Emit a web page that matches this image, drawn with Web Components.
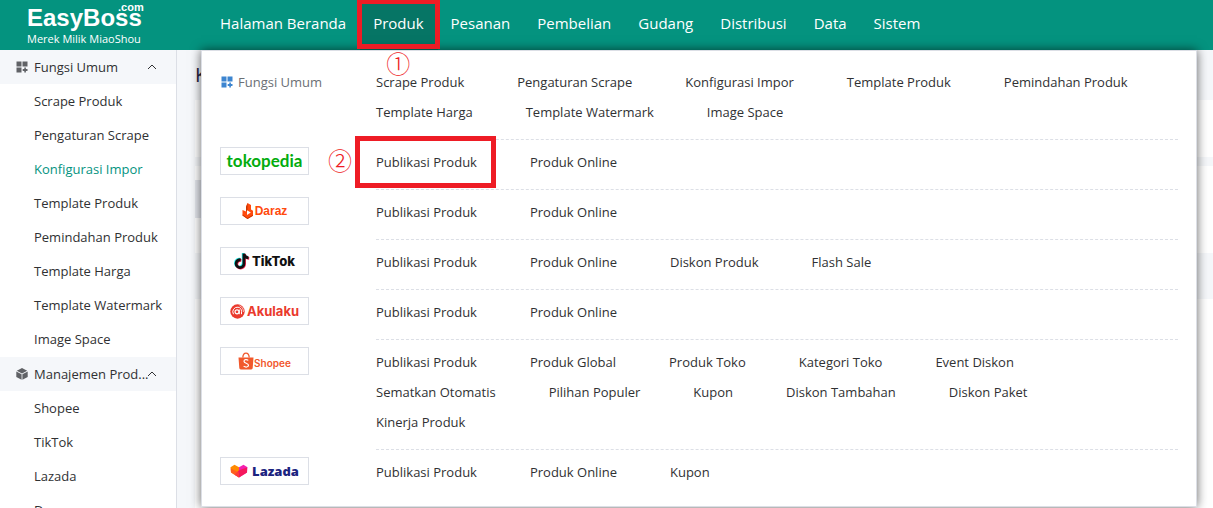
<!DOCTYPE html>
<html lang="id">
<head>
<meta charset="utf-8">
<title>EasyBoss</title>
<style>
  html, body {
    margin: 0;
    height: 100%;
    overflow: hidden;
  }
  body {
    font-family: "Open Sans", "Noto Sans", sans-serif;
    font-size: 13px;
    color: #303133;
  }
</style>
</head>
<body>
<easy-app></easy-app>

<script>
const gridIcon = `
  <svg viewBox="0 0 12 12" width="12" height="12" fill="currentColor" aria-hidden="true">
    <path d="M0.5 0.5h5v5h-5zM6.5 0.5h5v5h-5zM0.5 6.5h5v5h-5zM8.3 6.5h1.6v1.6h1.6v1.8h-1.6v1.6H8.3V9.9H6.7V8.1h1.6z"/>
  </svg>`;

const boxIcon = `
  <svg viewBox="0 0 12 12" width="12" height="12" fill="currentColor" aria-hidden="true">
    <path d="M6 0l5.2 2.7L6 5.4 0.8 2.7zM0.3 3.5l5.3 2.7v5.6L0.3 9.1zM11.7 3.5L6.4 6.2v5.6l5.3-2.7z"/>
  </svg>`;

class StepMark extends HTMLElement {
  constructor() {
    super();
    this.attachShadow({ mode: 'open' });
    this.shadowRoot.innerHTML = `
      <style>
        :host {
          display: block;
          width: 24px;
          font: 300 24px/22px "Noto Sans CJK SC", sans-serif;
          text-align: center;
          color: #ee1c25;
          pointer-events: none;
        }
      </style>
      <slot></slot>
    `;
  }
}
customElements.define('step-mark', StepMark);

class TopBar extends HTMLElement {
  constructor() {
    super();
    this.attachShadow({ mode: 'open' });
  }

  connectedCallback() {
    const items = ['Halaman Beranda', 'Produk', 'Pesanan', 'Pembelian', 'Gudang', 'Distribusi', 'Data', 'Sistem'];
    this.shadowRoot.innerHTML = `
      <style>
        :host {
          display: flex;
          height: 50px;
          background: #04937f;
          color: white;
        }
        a {
          color: inherit;
          text-decoration: none;
        }
        .brand {
          flex: none;
          box-sizing: border-box;
          width: 207px;
          padding: 5px 0 0 27px;
        }
        .name {
          display: flex;
          position: relative;
          font: bold 24px/26px "Liberation Sans", Arial, sans-serif;
        }
        .name small {
          position: absolute;
          left: 91px;
          top: -3px;
          font-size: 11px;
          line-height: 11px;
        }
        .tagline {
          display: block;
          font-size: 11px;
          line-height: 16px;
        }
        nav {
          display: flex;
          font-size: 15px;
          line-height: 46px;
          white-space: nowrap;
        }
        nav a {
          position: relative;
          height: 50px;
          padding: 0 14px 0 13px;
        }
        nav a.active {
          background: #067565;
        }
        .frame {
          position: absolute;
          inset: -1px -2px 1px -3px;
          z-index: 3;
          border: 5px solid #ee1c25;
        }
        step-mark {
          position: absolute;
          left: 26px;
          top: 52px;
          z-index: 3;
        }
      </style>
      <a class="brand" href="#">
        <span class="name">EasyBoss<small>.com</small></span>
        <span class="tagline">Merek Milik MiaoShou</span>
      </a>
      <nav>
        ${items.map(item => item === 'Produk'
          ? `<a class="active" href="#">${item}<span class="frame"></span><step-mark>①</step-mark></a>`
          : `<a href="#">${item}</a>`).join('')}
      </nav>
    `;
  }
}
customElements.define('top-bar', TopBar);

class SideGroup extends HTMLElement {
  constructor() {
    super();
    this.attachShadow({ mode: 'open' });
  }

  connectedCallback() {
    const icon = this.getAttribute('icon') === 'box' ? boxIcon : gridIcon;
    this.shadowRoot.innerHTML = `
      <style>
        :host {
          display: block;
          padding-bottom: 1px;
        }
        button {
          display: flex;
          align-items: center;
          width: 100%;
          height: 34px;
          padding: 0 19px 0 16px;
          border: 0;
          background: #f5f7fa;
          color: inherit;
          font: inherit;
          text-align: left;
        }
        svg {
          flex: none;
        }
        .icon {
          display: flex;
          color: #606266;
        }
        .label {
          flex: 1;
          min-width: 0;
          margin-left: 6px;
          white-space: nowrap;
        }
      </style>
      <button type="button" aria-expanded="true">
        <span class="icon">${icon}</span>
        <span class="label">${this.getAttribute('label')}</span>
        <svg viewBox="0 0 10 10" width="10" height="10" fill="none" aria-hidden="true">
          <path d="M1 7l4-4 4 4" stroke="#303133"/>
        </svg>
      </button>
      <slot></slot>
    `;
  }
}
customElements.define('side-group', SideGroup);

class SideItem extends HTMLElement {
  constructor() {
    super();
    this.attachShadow({ mode: 'open' });
    this.shadowRoot.innerHTML = `
      <style>
        :host {
          display: block;
        }
        a {
          display: block;
          padding-left: 34px;
          line-height: 34px;
          color: inherit;
          text-decoration: none;
          white-space: nowrap;
        }
        :host([active]) a {
          color: #04937f;
        }
      </style>
      <a href="#"><slot></slot></a>
    `;
  }
}
customElements.define('side-item', SideItem);

// Store badges: a small mark and the wordmark as text
const logos = {
  tokopedia: { text: 'tokopedia', mark: '' },
  daraz: {
    text: 'Daraz',
    mark: `<svg viewBox="0 0 12 16" width="12" height="16">
      <path fill="#ff4a0d" d="M5.500 0L9 2v4.500l2 1.200v5L5.500 16 .5 12.500V7L4 8.500V4z"/>
      <path fill="#fff" d="M5 7.200l3.800 2.300L5 12z"/>
      <path fill="#c93400" d="M4 4v4.500L5.500 7V0zM.5 11.500l5 3.500 5.500-3.300v1L5.500 16l-5-3.500z"/>
    </svg>`
  },
  tiktok: {
    text: 'TikTok',
    mark: `<svg viewBox="0 0 16 18" width="16" height="18" fill="none" stroke-width="2.800">
      <path stroke="#25f4ee" d="M6 7.200a3.900 3.900 0 1 0 3.200 3.800V1c.2 2.600 2 4 4.600 4.200"/>
      <path stroke="#fe2c55" d="M7.400 8.400a3.900 3.900 0 1 0 3.200 3.800V2.200c.2 2.600 2 4 4.600 4.200"/>
      <path stroke="#111" d="M6.700 7.800a3.900 3.900 0 1 0 3.200 3.800V1.600c.2 2.600 2 4 4.600 4.200"/>
    </svg>`
  },
  akulaku: {
    text: 'Akulaku',
    mark: `<svg viewBox="0 0 15 15" width="15" height="15" fill="none">
      <circle cx="7.500" cy="7.500" r="7.200" fill="#ea3a2d"/>
      <circle cx="7" cy="7.800" r="2" stroke="#fff" stroke-width="1.200"/>
      <path stroke="#fff" d="M9.300 5.500v4.700M3.500 10.200A4.600 4.600 0 0 1 8 3.200c2 .2 3.500 1.800 3.500 4.200v2.800"/>
      <path stroke="#fff" stroke-width=".7" d="M9.500 1.800c2.600 1 4 3 3.900 6.200"/>
    </svg>`
  },
  shopee: {
    text: 'Shopee',
    mark: `<svg viewBox="0 0 16 18" width="16" height="18" fill="none">
      <path fill="#f1582c" d="M.5 5.500h15l-.8 10.600a1.500 1.500 0 0 1-1.500 1.400H2.800a1.500 1.500 0 0 1-1.500-1.400z"/>
      <path stroke="#f1582c" stroke-width="1.300" d="M4.800 5.500C5 2.700 6.200 1.200 8 1.200s3 1.500 3.200 4.300"/>
      <path stroke="#fff" stroke-width="1.200" d="M10.300 8.400C8.800 7.200 6 7.400 6 9.300c0 2.200 4.500 1.700 4.500 4 0 2-3 2.300-4.900.8"/>
    </svg>`
  },
  lazada: {
    text: 'Lazada',
    mark: `<svg viewBox="0 0 18 14" width="18" height="14">
      <path fill="#ff8a00" d="M.5 3.200L4.500.7 9 3.200v10.300L1 8.600z"/>
      <path fill="#f41fb0" d="M17.500 3.200L13.500.7 9 3.200v10.300l8-4.900z"/>
      <path fill="#f5185c" d="M9 6.200l8-2.600v5L9 13.500 4.500 10.700z"/>
      <path fill="#ff4b2b" d="M.7 4.500L9 8.500v5L1 8.600z" opacity=".7"/>
    </svg>`
  }
};

class StoreLogo extends HTMLElement {
  constructor() {
    super();
    this.attachShadow({ mode: 'open' });
  }

  connectedCallback() {
    const name = this.getAttribute('name');
    const logo = logos[name];
    this.shadowRoot.innerHTML = `
      <style>
        :host {
          display: block;
        }
        a {
          display: flex;
          align-items: center;
          justify-content: center;
          gap: 2px;
          box-sizing: border-box;
          width: 89px;
          height: 28px;
          border: 1px solid #dcdfe6;
          background: white;
          text-decoration: none;
          line-height: 20px;
        }
        svg {
          flex: none;
        }
        .tokopedia {
          color: #03ac0e;
          font: bold 17px/20px Lato, sans-serif;
        }
        .daraz {
          gap: 1px;
          color: #ff4a0d;
          font: bold 12px/20px "Liberation Sans", Arial, sans-serif;
        }
        .tiktok {
          color: #111;
          font: 800 13px/20px Inter, sans-serif;
        }
        .akulaku {
          color: #ea3a2d;
          font: bold 13px/20px Inter, sans-serif;
        }
        .shopee {
          gap: 0;
          color: #f1582c;
          font: 600 10px/20px Inter, sans-serif;
        }
        .shopee span {
          padding-top: 4px;
        }
        .lazada {
          gap: 4px;
          color: #1c2480;
          font: 800 13px/20px "Open Sans", sans-serif;
        }
      </style>
      <a class="${name}" href="#">${logo.mark}<span>${logo.text}</span></a>
    `;
  }
}
customElements.define('store-logo', StoreLogo);

class MenuRow extends HTMLElement {
  constructor() {
    super();
    this.attachShadow({ mode: 'open' });
    this.shadowRoot.innerHTML = `
      <style>
        :host {
          display: grid;
          grid-template-columns: 156px 1fr;
        }
        .head {
          padding-top: 7px;
        }
        .links {
          display: flex;
          flex-wrap: wrap;
          column-gap: 53px;
          padding: 7px 24px 12px 0;
          border-bottom: 1px dashed #dcdfe6;
        }
        :host(:last-of-type) .links {
          border-bottom: 0;
        }
      </style>
      <div class="head"><slot name="head"></slot></div>
      <div class="links"><slot></slot></div>
    `;
  }
}
customElements.define('menu-row', MenuRow);

class MenuLink extends HTMLElement {
  constructor() {
    super();
    this.attachShadow({ mode: 'open' });
    this.shadowRoot.innerHTML = `
      <style>
        :host {
          display: block;
          position: relative;
          line-height: 30px;
          white-space: nowrap;
        }
        a {
          color: inherit;
          text-decoration: none;
        }
        .frame {
          position: absolute;
          inset: -11px -19px -11px -21px;
          border: 5px solid #ee1c25;
          pointer-events: none;
        }
        step-mark {
          position: absolute;
          left: -48px;
          top: 2px;
        }
      </style>
      <a href="#"><slot></slot></a>
    `;
  }

  connectedCallback() {
    if (this.hasAttribute('marked')) {
      this.shadowRoot.innerHTML += `
        <span class="frame"></span>
        <step-mark>${this.getAttribute('marked')}</step-mark>
      `;
    }
  }
}
customElements.define('menu-link', MenuLink);

class MegaMenu extends HTMLElement {
  constructor() {
    super();
    this.attachShadow({ mode: 'open' });
  }

  connectedCallback() {
    const rows = [
      ['tokopedia', ['Publikasi Produk', 'Produk Online']],
      ['daraz', ['Publikasi Produk', 'Produk Online']],
      ['tiktok', ['Publikasi Produk', 'Produk Online', 'Diskon Produk', 'Flash Sale']],
      ['akulaku', ['Publikasi Produk', 'Produk Online']],
      ['shopee', ['Publikasi Produk', 'Produk Global', 'Produk Toko', 'Kategori Toko', 'Event Diskon',
        'Sematkan Otomatis', 'Pilihan Populer', 'Kupon', 'Diskon Tambahan', 'Diskon Paket', 'Kinerja Produk']],
      ['lazada', ['Publikasi Produk', 'Produk Online', 'Kupon']]
    ];
    const common = ['Scrape Produk', 'Pengaturan Scrape', 'Konfigurasi Impor', 'Template Produk',
      'Pemindahan Produk', 'Template Harga', 'Template Watermark', 'Image Space'];

    this.shadowRoot.innerHTML = `
      <style>
        :host {
          display: block;
          box-sizing: border-box;
          padding: 9px 18px 7px;
          border: 1px solid #dcdfe6;
          background: white;
          box-shadow: 0 0 10px rgba(0, 0, 0, 0.6);
        }
        .title {
          display: flex;
          align-items: center;
          gap: 5px;
          height: 30px;
          color: #6b6f75;
        }
        .title svg {
          margin-left: 1px;
          color: #3d85d0;
        }
      </style>
      <menu-row>
        <div class="title" slot="head">${gridIcon}<span>Fungsi Umum</span></div>
        ${common.map(text => `<menu-link>${text}</menu-link>`).join('')}
      </menu-row>
      ${rows.map(([store, links]) => `
        <menu-row>
          <store-logo slot="head" name="${store}"></store-logo>
          ${links.map((text, i) =>
            `<menu-link${store === 'tokopedia' && i === 0 ? ' marked="②"' : ''}>${text}</menu-link>`).join('')}
        </menu-row>`).join('')}
    `;
  }
}
customElements.define('mega-menu', MegaMenu);

// The page below the open menu
class PageContent extends HTMLElement {
  constructor() {
    super();
    this.attachShadow({ mode: 'open' });
    this.shadowRoot.innerHTML = `
      <style>
        :host {
          display: flex;
          flex-direction: column;
          padding-left: 18px;
          background: #f5f7fa;
        }
        h1 {
          margin: 0;
          font-size: 20px;
          font-weight: 400;
          line-height: 50px;
          color: #1f2340;
        }
        .filters {
          height: 57px;
          margin-bottom: 9px;
          background: white;
        }
        .list {
          flex: 1;
          padding-top: 14px;
          background: white;
        }
        .tabs {
          width: 50%;
          height: 38px;
          background: #e4e7ed;
        }
        .table-head {
          height: 46px;
          margin-top: 35px;
          background: #f5f7fa;
        }
      </style>
      <h1>K</h1>
      <div class="filters"></div>
      <div class="list">
        <div class="tabs"></div>
        <div class="table-head"></div>
      </div>
    `;
  }
}
customElements.define('page-content', PageContent);

class EasyApp extends HTMLElement {
  constructor() {
    super();
    this.attachShadow({ mode: 'open' });
    this.shadowRoot.innerHTML = `
      <style>
        :host {
          display: grid;
          grid-template: auto minmax(0, 1fr) / 177px minmax(0, 1fr);
          height: 100vh;
        }
        top-bar {
          grid-column: 1 / -1;
        }
        aside {
          overflow: hidden;
          border-right: 1px solid #dcdfe6;
          background: white;
        }
        main {
          display: grid;
          position: relative;
        }
        mega-menu {
          position: absolute;
          top: 0;
          left: 24px;
          right: 16px;
          z-index: 2;
        }
      </style>
      <top-bar></top-bar>
      <aside>
        <side-group label="Fungsi Umum" icon="grid">
          <side-item>Scrape Produk</side-item>
          <side-item>Pengaturan Scrape</side-item>
          <side-item active>Konfigurasi Impor</side-item>
          <side-item>Template Produk</side-item>
          <side-item>Pemindahan Produk</side-item>
          <side-item>Template Harga</side-item>
          <side-item>Template Watermark</side-item>
          <side-item>Image Space</side-item>
        </side-group>
        <side-group label="Manajemen Prod..." icon="box">
          <side-item>Shopee</side-item>
          <side-item>TikTok</side-item>
          <side-item>Lazada</side-item>
          <side-item>Daraz</side-item>
        </side-group>
      </aside>
      <main>
        <page-content></page-content>
        <mega-menu></mega-menu>
      </main>
    `;
  }
}
customElements.define('easy-app', EasyApp);
</script>
</body>
</html>
